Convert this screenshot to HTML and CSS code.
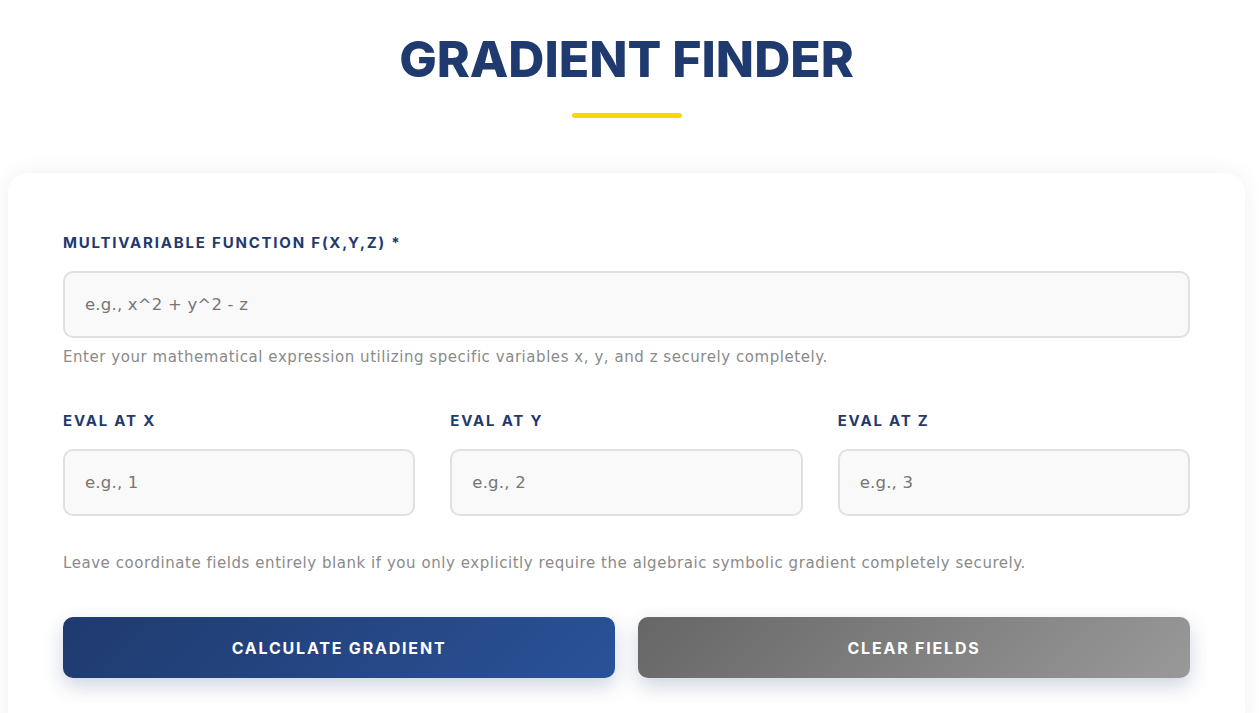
FILE: index.html
```html
<!DOCTYPE html>
<html lang="en">

    <head>
        <meta charset="UTF-8">
        <meta name="viewport" content="width=device-width, initial-scale=1.0">
        <title>Gradient Finder</title>
        <link rel="stylesheet" href="styles.css">
    </head>

    <body>
        <div class="page">
            <div class="header">
                <h1>GRADIENT FINDER</h1>
                <div class="underline"></div>
            </div>

            <div class="card">
                <div class="field">
                    <label for="func">MULTIVARIABLE FUNCTION F(X,Y,Z) *</label>
                    <input type="text" id="func" placeholder="e.g., x^2 + y^2 - z">
                    <p class="hint">Enter your mathematical expression utilizing specific variables x, y, and z securely completely.</p>
                </div>

                <div class="evalRow">
                    <div class="field">
                        <label for="ex">EVAL AT X</label>
                        <input type="text" id="ex" placeholder="e.g., 1">
                    </div>
                    <div class="field">
                        <label for="ey">EVAL AT Y</label>
                        <input type="text" id="ey" placeholder="e.g., 2">
                    </div>
                    <div class="field">
                        <label for="ez">EVAL AT Z</label>
                        <input type="text" id="ez" placeholder="e.g., 3">
                    </div>
                </div>
                <p class="hint spaced">Leave coordinate fields entirely blank if you only explicitly require the algebraic symbolic gradient completely securely.</p>

                <div class="buttons">
                    <button class="btn calc">CALCULATE GRADIENT</button>
                    <button class="btn clear">CLEAR FIELDS</button>
                </div>
            </div>
        </div>
    </body>

</html>
```

FILE: styles.css
```css
* {
    box-sizing: border-box;
    padding: 0;
    margin: 0;
}

body {
    font-family: Inter, "Noto Sans", sans-serif;
    background-color: #fff;
    overflow: hidden;
}

.page {
    width: 1237px;
    margin-left: 8px;
}

.header {
    display: flex;
    flex-direction: column;
    align-items: center;
    padding-top: 28px;
}

.header h1 {
    font-size: 50px;
    font-weight: 800;
    letter-spacing: 0;
    color: #1f3a6e;
    line-height: 62px;
}

.underline {
    width: 110px;
    height: 5px;
    border-radius: 3px;
    background-color: #ffd700;
    margin-top: 23px;
}

.card {
    margin-top: 55px;
    background-color: #fff;
    border-radius: 20px;
    box-shadow: 0 0 25px rgba(0, 0, 0, 0.06);
    padding: 60px 55px 60px;
}

.field {
    display: flex;
    flex-direction: column;
}

.field label {
    font-size: 15px;
    font-weight: 700;
    letter-spacing: 1.8px;
    color: #1f3a6e;
    line-height: 20px;
    margin-bottom: 18px;
}

.field input {
    height: 67px;
    border: 2px solid #e0e0e0;
    border-radius: 10px;
    background-color: #f9f9f9;
    padding: 0 20px;
    font-family: "DejaVu Sans", sans-serif;
    font-size: 16.5px;
    letter-spacing: 0.2px;
    color: #333;
    outline: none;
}

.field input::placeholder {
    color: #757575;
}

.hint {
    font-family: "DejaVu Sans", sans-serif;
    font-size: 15px;
    letter-spacing: 0.55px;
    color: #8a8a8a;
    line-height: 20px;
    margin-top: 9px;
}

.evalRow {
    display: grid;
    grid-template-columns: repeat(3, 1fr);
    gap: 35px;
    margin-top: 44px;
}

.hint.spaced {
    margin-top: 37px;
}

.buttons {
    display: grid;
    grid-template-columns: 1fr 1fr;
    gap: 23px;
    margin-top: 44px;
}

.btn {
    height: 61px;
    border: none;
    border-radius: 10px;
    color: #fff;
    font-family: inherit;
    font-size: 16px;
    font-weight: 700;
    letter-spacing: 1.8px;
    cursor: pointer;
    box-shadow: 0 8px 20px rgba(30, 60, 114, 0.22);
}

.btn.calc {
    background-image: linear-gradient(135deg, #1f3a6e, #2a5298);
}

.btn.clear {
    background-image: linear-gradient(135deg, #666, #999);
}
```
